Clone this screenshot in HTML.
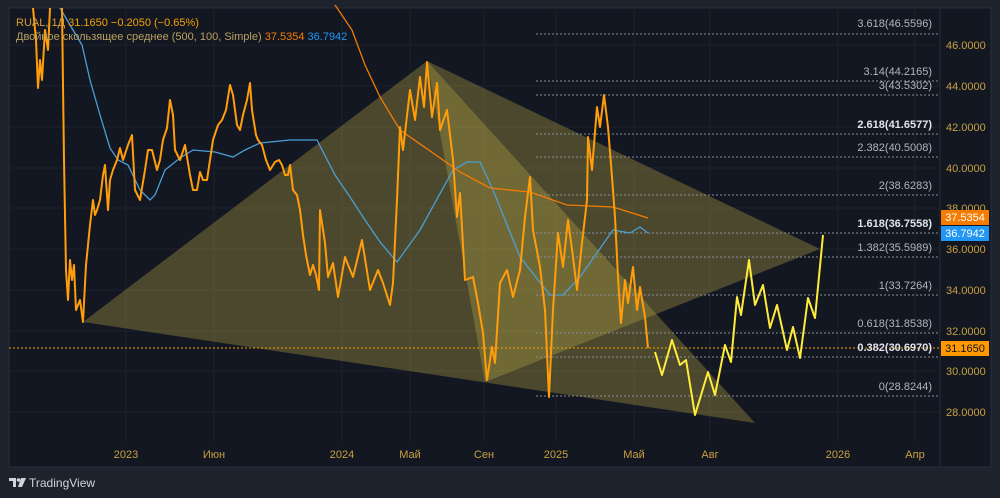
<!DOCTYPE html>
<html><head><meta charset="utf-8"><style>
html,body{margin:0;padding:0;background:#1e222d;width:1000px;height:498px;overflow:hidden;font-family:"Liberation Sans","DejaVu Sans",sans-serif}
svg{position:absolute;left:0;top:0}
</style></head><body>
<svg width="1000" height="498" viewBox="0 0 1000 498" xmlns="http://www.w3.org/2000/svg">
<rect x="0" y="0" width="1000" height="498" fill="#1e222d"/>
<rect x="9" y="8" width="982" height="459" fill="#131722" stroke="#2a2e39"/>
<g stroke="#1e222c" stroke-width="1">
<line x1="9" y1="45" x2="940" y2="45"/><line x1="9" y1="86" x2="940" y2="86"/><line x1="9" y1="127" x2="940" y2="127"/><line x1="9" y1="168" x2="940" y2="168"/><line x1="9" y1="208" x2="940" y2="208"/><line x1="9" y1="249" x2="940" y2="249"/><line x1="9" y1="290" x2="940" y2="290"/><line x1="9" y1="331" x2="940" y2="331"/><line x1="9" y1="371" x2="940" y2="371"/><line x1="9" y1="412" x2="940" y2="412"/>
<line x1="126" y1="8" x2="126" y2="442"/><line x1="214" y1="8" x2="214" y2="442"/><line x1="342" y1="8" x2="342" y2="442"/><line x1="410" y1="8" x2="410" y2="442"/><line x1="484" y1="8" x2="484" y2="442"/><line x1="556" y1="8" x2="556" y2="442"/><line x1="634" y1="8" x2="634" y2="442"/><line x1="710" y1="8" x2="710" y2="442"/><line x1="838" y1="8" x2="838" y2="442"/><line x1="915" y1="8" x2="915" y2="442"/>
</g>
<line x1="940" y1="8" x2="940" y2="467" stroke="#2a2e39"/>
<polygon points="83,322 427,61 755,423" fill="rgba(190,172,70,0.33)"/>
<polygon points="427,61 485,382 820,249" fill="rgba(190,172,70,0.33)"/>
<g stroke="#8a8e98" stroke-width="1" stroke-dasharray="2,2">
<line x1="536" y1="34" x2="940" y2="34"/><line x1="536" y1="81" x2="940" y2="81"/><line x1="536" y1="95" x2="940" y2="95"/><line x1="536" y1="134" x2="940" y2="134"/><line x1="536" y1="157" x2="940" y2="157"/><line x1="536" y1="195" x2="940" y2="195"/><line x1="536" y1="233" x2="940" y2="233"/><line x1="536" y1="257" x2="940" y2="257"/><line x1="536" y1="295" x2="940" y2="295"/><line x1="536" y1="333" x2="940" y2="333"/><line x1="536" y1="357" x2="940" y2="357"/><line x1="536" y1="396" x2="940" y2="396"/>
</g>
<line x1="9" y1="348" x2="940" y2="348" stroke="#f5a000" stroke-dasharray="2,2"/>
<g font-size="11" fill="#b2b5be" text-anchor="end">
<text x="932" y="27">3.618(46.5596)</text><text x="932" y="75">3.14(44.2165)</text><text x="932" y="89">3(43.5302)</text><text x="932" y="128" fill="#e0e3eb" font-weight="bold">2.618(41.6577)</text><text x="932" y="151">2.382(40.5008)</text><text x="932" y="189">2(38.6283)</text><text x="932" y="227" fill="#e0e3eb" font-weight="bold">1.618(36.7558)</text><text x="932" y="251">1.382(35.5989)</text><text x="932" y="289">1(33.7264)</text><text x="932" y="327">0.618(31.8538)</text><text x="932" y="351" fill="#e0e3eb" font-weight="bold">0.382(30.6970)</text><text x="932" y="390">0(28.8244)</text>
</g>
<polyline fill="none" stroke="#4a9fd6" stroke-width="1.3" points="60,8 70,25 82,45 90,80 100,115 110,148 118,160 128,165 140,190 150,200 155,195 165,170 180,158 193,150 215,152 233,157 245,150 260,143 290,140 317,140 335,175 350,197 365,220 380,242 397,262 420,230 453,170 467,162 480,162 493,190 520,257 550,295 563,295 580,277 613,230 630,233 640,227 648,233"/>
<polyline fill="none" stroke="#f57c00" stroke-width="1.3" points="335,5 352,30 365,65 380,97 400,130 433,153 460,172 490,188 530,192 567,205 613,207 648,218"/>
<polyline fill="none" stroke="#ff9d0a" stroke-width="2" stroke-linejoin="round" points="33,8 36,40 38,88 40,60 42,80 45,30 48,50 50,8"/>
<polyline fill="none" stroke="#ff9d0a" stroke-width="2" stroke-linejoin="round" points="62,8 64,160 66,270 68,300 70,260 72,280 74,265 76,310 80,300 83,322 86,265 90,225 93,200 95,215 97,210 100,200 103,175 105,165 108,210 110,180 113,170 117,160 120,148 123,160 128,145 132,135 135,190 140,200 145,170 148,150 152,150 157,170 160,160 163,140 167,128 170,100 173,115 175,150 180,160 185,145 190,175 193,190 197,190 200,172 203,180 207,180 210,160 213,140 218,125 222,120 226,110 230,85 233,95 237,125 240,130 243,115 247,100 250,83 252,110 256,135 258,140 262,145 266,160 270,170 275,162 279,160 282,165 285,175 288,175 290,165 293,190 297,195 300,210 303,235 306,255 310,275 313,265 316,275 319,290 320,210 325,243 328,277 333,263 338,297 345,257 353,277 362,240 370,290 378,270 383,283 390,305 393,283 397,200 400,127 403,150 410,90 415,120 420,77 424,107 427,62 432,117 437,83 440,130 447,110 453,160 457,217 460,193 465,280 473,277 478,303 483,333 487,380 492,347 495,363 500,283 507,270 513,297 520,270 525,217 530,177 533,230 540,267 545,310 549,397 553,310 558,233 563,267 568,220 573,257 577,290 582,243 587,200 588,137 592,170 597,107 600,127 604,95 608,127 612,177 615,217 618,277 621,323 625,280 628,303 633,267 637,310 640,287 645,317 648,348"/>
<polyline fill="none" stroke="#ffeb3b" stroke-width="2" stroke-linejoin="round" points="655,352 662,375 672,340 680,365 686,360 695,415 708,372 715,395 725,345 731,362 737,297 741,315 749,260 755,305 763,285 770,328 777,305 787,350 793,327 800,358 808,298 815,318 823,235"/>
<g font-size="11" fill="#c8a040">
<text x="946" y="49">46.0000</text><text x="946" y="90">44.0000</text><text x="946" y="131">42.0000</text><text x="946" y="172">40.0000</text><text x="946" y="212">38.0000</text><text x="946" y="253">36.0000</text><text x="946" y="294">34.0000</text><text x="946" y="335">32.0000</text><text x="946" y="375">30.0000</text><text x="946" y="416">28.0000</text>
</g>
<g font-size="11" text-anchor="middle">
<rect x="941" y="210" width="48" height="15" fill="#f57c00"/><text x="965" y="221" fill="#fff">37.5354</text>
<rect x="941" y="226" width="48" height="15" fill="#2196f3"/><text x="965" y="237" fill="#fff">36.7942</text>
<rect x="941" y="341" width="48" height="15" fill="#ff9800"/><text x="965" y="352" fill="#131722">31.1650</text>
</g>
<g font-size="11" fill="#c8a040" text-anchor="middle">
<text x="126" y="458">2023</text><text x="214" y="458">Июн</text><text x="342" y="458">2024</text><text x="410" y="458">Май</text><text x="484" y="458">Сен</text><text x="556" y="458">2025</text><text x="634" y="458">Май</text><text x="710" y="458">Авг</text><text x="838" y="458">2026</text><text x="915" y="458">Апр</text>
</g>
<text x="16" y="26" font-size="11" fill="#d9a030">RUAL, 1Д <tspan fill="#f5a000">31.1650  −0.2050 (−0.65%)</tspan></text>
<text x="16" y="40" font-size="11" fill="#b8a060">Двойное скользящее среднее (500, 100, Simple) <tspan fill="#f57c00">37.5354</tspan> <tspan fill="#2196f3">36.7942</tspan></text>
<g fill="#d1d4dc"><path d="M9 478h7v9h-3v-6h-4z"/><circle cx="18.5" cy="480" r="1.8"/><path d="M21 478h5l-4 9h-4z"/></g>
<text x="29" y="487" font-size="12" fill="#d1d4dc">TradingView</text>
</svg>
</body></html>
